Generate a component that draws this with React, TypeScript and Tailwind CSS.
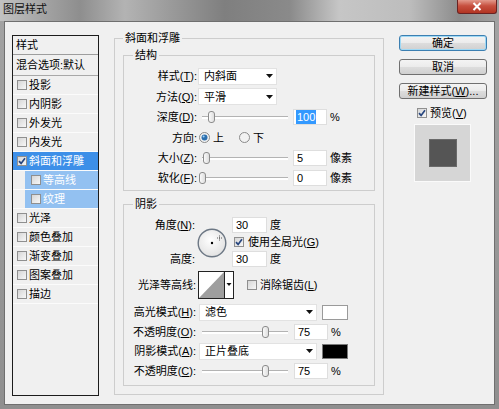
import React from 'react';

const K = ({ c }: { c: string }) => <span className="underline">{c}</span>;

function Box({ checked, className = '' }: { checked?: boolean; className?: string }) {
  return (
    <span
      className={
        'flex h-[10px] w-[10px] shrink-0 items-center justify-center border border-[#8f8f8f] bg-[linear-gradient(135deg,#d6d6d6,#f7f7f7)] ' +
        className
      }
    >
      {checked && (
        <svg viewBox="0 0 8 8" className="h-[8px] w-[8px]">
          <path d="M1 4.2 L3.1 6.4 L7 1.3" stroke="#27467f" strokeWidth="1.7" fill="none" />
        </svg>
      )}
    </span>
  );
}

function Radio({ on }: { on?: boolean }) {
  return (
    <svg width="11" height="11" viewBox="0 0 11 11" className="shrink-0">
      <circle cx="5.5" cy="5.5" r="5" fill="#f2f2f2" stroke="#8a8a8a" />
      {on && <circle cx="5.5" cy="5.5" r="3" fill="#2c6fae" />}
      {on && <circle cx="4.6" cy="4.6" r="1" fill="#9fd0f5" />}
    </svg>
  );
}

function Arrow() {
  return (
    <svg width="7" height="4" viewBox="0 0 7 4">
      <path d="M0 0h7L3.5 4z" fill="#111" />
    </svg>
  );
}

function Select({ v, w }: { v: string; w: string }) {
  return (
    <div className={'flex h-[17px] items-center justify-between border border-[#e2e2e2] bg-white pl-[5px] pr-[3px] ' + w}>
      <span>{v}</span>
      <Arrow />
    </div>
  );
}

function Field({ v, sel, w = 'w-[34px]' }: { v: string; sel?: boolean; w?: string }) {
  return (
    <div className={'flex h-[16px] items-center border border-[#dedede] bg-white pl-[2px] ' + w}>
      {sel ? <span className="bg-[#3399ff] px-[1px] text-white">{v}</span> : <span className="pl-[1px]">{v}</span>}
    </div>
  );
}

function Slider({ pos }: { pos: number }) {
  return (
    <div className="relative h-[14px] w-[86px] shrink-0">
      <div className="absolute left-0 right-0 top-[6px] h-[3px] border-t border-[#b3b3b3] bg-white" />
      <div
        className="absolute top-[1px] h-[12px] w-[7px] rounded-[3px] border border-[#8c8c8c] bg-[linear-gradient(90deg,#fafafa,#dedede)]"
        style={{ left: pos }}
      />
    </div>
  );
}

function TitleBar() {
  return (
    <div className="flex h-[21px] items-start justify-between bg-[linear-gradient(90deg,#c2c2c2_0%,#a6a6a6_8%,#8e8e8e_16%,#b3b3b3_25%,#9b9b9b_34%,#7f7f7f_45%,#8a8a8a_58%,#c6c6c6_68%,#bdbdbd_82%,#8c8c8c_92%,#a2a2a2_100%)]">
      <span className="pl-[3px] pt-[2px] text-[11px] text-[#111]">图层样式</span>
      <div className="mr-[2px] flex h-[14px] w-[40px] items-center justify-center rounded-b-[3px] border border-t-0 border-[#6a2222] bg-[linear-gradient(180deg,#e39a8c,#c7503f_45%,#b23422)]">
        <svg width="10" height="9" viewBox="0 0 10 9">
          <path d="M1.5 1 L8.5 8 M8.5 1 L1.5 8" stroke="#fff" strokeWidth="2" />
        </svg>
      </div>
    </div>
  );
}

const items = [
  { t: '投影' },
  { t: '内阴影' },
  { t: '外发光' },
  { t: '内发光' },
  { t: '斜面和浮雕', sel: true },
  { t: '等高线', sub: true },
  { t: '纹理', sub: true },
  { t: '光泽' },
  { t: '颜色叠加' },
  { t: '渐变叠加' },
  { t: '图案叠加' },
  { t: '描边' },
];

function StyleList() {
  return (
    <div className="ml-[7px] mt-[13px] flex h-[361px] w-[87px] shrink-0 flex-col border border-[#1c1c1c] bg-[#f0f0f0]">
      <div className="flex h-[19px] items-center border-b border-[#9d9d9d] pl-[3px]">样式</div>
      <div className="flex h-[21px] items-center border-b border-[#a8a8a8] pl-[3px]">混合选项:默认</div>
      {items.map((it) =>
        it.sub ? (
          <div key={it.t} className="flex h-[19px] border-b border-[#fbfbfb] pl-[12px]">
            <div className="flex flex-1 items-center bg-[#93c1f1] pl-[6px] text-white">
              <Box />
              <span className="ml-[2px]">{it.t}</span>
            </div>
          </div>
        ) : (
          <div
            key={it.t}
            className={
              'flex h-[19px] items-center border-b border-[#fbfbfb] pl-[4px] ' + (it.sel ? 'bg-[#3d8fe8] text-white' : '')
            }
          >
            <Box checked={it.sel} />
            <span className="ml-[2px]">{it.t}</span>
          </div>
        )
      )}
    </div>
  );
}

function Main() {
  return (
    <fieldset className="ml-[15px] mt-[8px] h-[365px] w-[270px] shrink-0 border border-[#cdcdcd] px-[8px] pb-[6px]">
      <legend className="px-[2px] leading-[16px]">斜面和浮雕</legend>

      <fieldset className="mt-[1px] border border-[#cdcdcd] px-0 pb-[3px] pt-[3px]">
        <legend className="ml-[9px] px-[2px] leading-[16px]">结构</legend>
        <div className="flex h-[20px] items-center">
          <span className="w-[73px] text-right">
            样式(<K c="T" />):
          </span>
          <Select v="内斜面" w="ml-[1px] w-[79px]" />
        </div>
        <div className="flex h-[21px] items-center">
          <span className="w-[73px] text-right">
            方法(<K c="Q" />):
          </span>
          <Select v="平滑" w="ml-[1px] w-[79px]" />
        </div>
        <div className="flex h-[20px] items-center">
          <span className="w-[73px] text-right">
            深度(<K c="D" />):
          </span>
          <div className="ml-[5px]">
            <Slider pos={6} />
          </div>
          <div className="ml-[5px]">
            <Field v="100" sel />
          </div>
          <span className="ml-[3px]">%</span>
        </div>
        <div className="flex h-[21px] items-center">
          <span className="w-[73px] text-right">方向:</span>
          <span className="ml-[2px] flex items-center">
            <Radio on />
            <span className="ml-[3px]">上</span>
          </span>
          <span className="ml-[15px] flex items-center">
            <Radio />
            <span className="ml-[3px]">下</span>
          </span>
        </div>
        <div className="flex h-[20px] items-center">
          <span className="w-[73px] text-right">
            大小(<K c="Z" />):
          </span>
          <div className="ml-[5px]">
            <Slider pos={1} />
          </div>
          <div className="ml-[5px]">
            <Field v="5" />
          </div>
          <span className="ml-[3px]">像素</span>
        </div>
        <div className="flex h-[19px] items-center">
          <span className="w-[73px] text-right">
            软化(<K c="F" />):
          </span>
          <div className="ml-[5px]">
            <Slider pos={-3} />
          </div>
          <div className="ml-[5px]">
            <Field v="0" />
          </div>
          <span className="ml-[3px]">像素</span>
        </div>
      </fieldset>

      <fieldset className="mt-[5px] border border-[#cdcdcd] px-0 pb-[4px] pt-[4px]">
        <legend className="ml-[9px] px-[2px] leading-[16px]">阴影</legend>
        <div className="grid grid-cols-[71px_32px_auto] grid-rows-[18px_15px_20px]">
          <span className="col-start-1 row-start-1 self-center text-right">
            角度(<K c="N" />):
          </span>
          <span className="col-start-1 row-start-3 self-center text-right">高度:</span>
          <div className="col-start-2 row-span-3 row-start-1 self-center pl-[2px]">
            <svg width="30" height="30" viewBox="0 0 30 30">
              <defs>
                <radialGradient id="dial" cx="45%" cy="40%" r="60%">
                  <stop offset="0" stopColor="#ffffff" />
                  <stop offset="1" stopColor="#e2e2e2" />
                </radialGradient>
              </defs>
              <circle cx="15" cy="15" r="13.8" fill="url(#dial)" stroke="#6c7784" strokeWidth="1.4" />
              <circle cx="15" cy="15" r="1.2" fill="#000" />
              <path d="M22.5 7.5v5M20 10h5" stroke="#333" strokeWidth="0.8" strokeDasharray="1 1" />
            </svg>
          </div>
          <div className="col-start-3 row-start-1 flex items-center pl-[5px]">
            <Field v="30" w="w-[35px]" />
            <span className="ml-[3px]">度</span>
          </div>
          <div className="col-start-3 row-start-2 flex items-center pl-[7px]">
            <Box checked />
            <span className="ml-[4px]">
              使用全局光(<K c="G" />)
            </span>
          </div>
          <div className="col-start-3 row-start-3 flex items-center pl-[5px]">
            <Field v="30" w="w-[35px]" />
            <span className="ml-[3px]">度</span>
          </div>
        </div>

        <div className="mt-[2px] flex h-[28px] items-center">
          <span className="w-[72px] text-right">光泽等高线:</span>
          <svg width="36" height="28" viewBox="0 0 36 28" className="ml-[2px]">
            <rect x="0.5" y="0.5" width="35" height="27" fill="#fff" stroke="#222" />
            <path d="M1 27 L26 1 L26 27 Z" fill="#9e9e9e" />
            <path d="M26.5 1 V27" stroke="#222" />
            <path d="M28.5 12h5l-2.5 3z" fill="#111" />
          </svg>
          <span className="ml-[13px] flex items-center">
            <Box />
            <span className="ml-[3px]">
              消除锯齿(<K c="L" />)
            </span>
          </span>
        </div>

        <div className="mt-[3px] flex h-[20px] items-center">
          <span className="w-[72px] text-right">
            高光模式(<K c="H" />):
          </span>
          <Select v="滤色" w="ml-[3px] w-[118px]" />
          <div className="ml-[5px] h-[15px] w-[26px] border border-[#9a9a9a] bg-white" />
        </div>
        <div className="flex h-[19px] items-center">
          <span className="w-[72px] text-right">
            不透明度(<K c="O" />):
          </span>
          <div className="ml-[6px]">
            <Slider pos={60} />
          </div>
          <div className="ml-[6px]">
            <Field v="75" />
          </div>
          <span className="ml-[3px]">%</span>
        </div>
        <div className="flex h-[20px] items-center">
          <span className="w-[72px] text-right">
            阴影模式(<K c="A" />):
          </span>
          <Select v="正片叠底" w="ml-[3px] w-[118px]" />
          <div className="ml-[5px] h-[15px] w-[26px] border border-[#7a7a7a] bg-black" />
        </div>
        <div className="flex h-[20px] items-center">
          <span className="w-[72px] text-right">
            不透明度(<K c="C" />):
          </span>
          <div className="ml-[6px]">
            <Slider pos={60} />
          </div>
          <div className="ml-[6px]">
            <Field v="75" />
          </div>
          <span className="ml-[3px]">%</span>
        </div>
      </fieldset>
    </fieldset>
  );
}

function Side() {
  const btn =
    'flex h-[16px] items-center justify-center rounded-[3px] border bg-[linear-gradient(180deg,#f4f4f4,#ebebeb_50%,#dddddd_50%,#d0d0d0)]';
  return (
    <div className="ml-[15px] mt-[13px] flex w-[88px] shrink-0 flex-col">
      <div className={btn + ' border-[#3c7fb1] shadow-[inset_0_0_0_1px_#9fd9f5]'}>确定</div>
      <div className={btn + ' mt-[8px] border-[#707070]'}>取消</div>
      <div className={btn + ' mt-[8px] border-[#707070]'}>
        新建样式(<K c="W" />)...
      </div>
      <div className="mt-[8px] flex h-[12px] items-center pl-[18px]">
        <Box checked />
        <span className="ml-[3px]">
          预览(<K c="V" />)
        </span>
      </div>
      <div className="ml-[15px] mt-[5px] flex h-[58px] w-[57px] items-center justify-center border border-[#fafafa] bg-[#d6d6d6]">
        <div className="h-[28px] w-[28px] border border-[#6a6a6a] bg-[#555555]" />
      </div>
    </div>
  );
}

export default function App() {
  return (
    <div className="flex h-[409px] w-[499px] flex-col bg-[linear-gradient(180deg,#a3a3a3,#8f8f8f)] font-['Liberation_Sans','Noto_Sans_CJK_SC',sans-serif] text-[11px] leading-[14px] text-black">
      <TitleBar />
      <div className="mx-[4px] mb-[4px] flex flex-1 border border-[#6f6f6f] bg-[#f0f0f0]">
        <StyleList />
        <Main />
        <Side />
      </div>
    </div>
  );
}
